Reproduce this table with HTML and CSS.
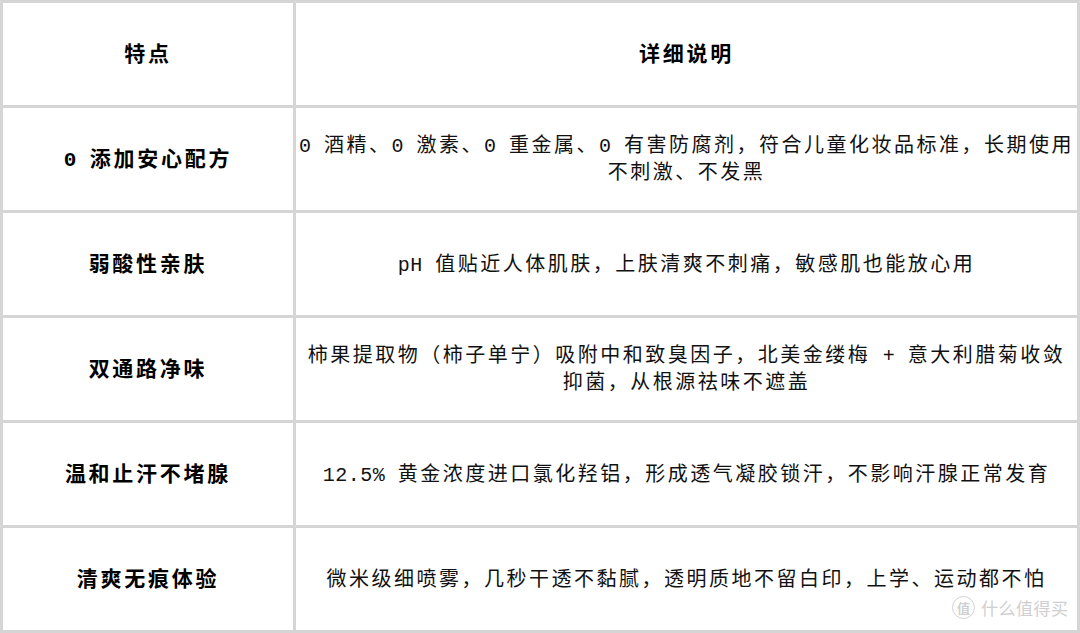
FILE: index.html
```html
<!DOCTYPE html>
<html lang="zh-CN">
<head>
<meta charset="utf-8">
<title>特点</title>
<link rel="stylesheet" href="styles.css">
</head>
<body>
<div class="page">
  <table class="spec">
    <colgroup>
      <col class="col-feature">
      <col class="col-detail">
    </colgroup>
    <thead>
      <tr>
        <th>特点</th>
        <th>详细说明</th>
      </tr>
    </thead>
    <tbody>
      <tr>
        <td class="feature"><span class="en">0 </span>添加安心配方</td>
        <td class="detail"><span class="en">0 </span>酒精、<span class="en">0 </span>激素、<span class="en">0 </span>重金属、<span class="en">0 </span>有害防腐剂，符合儿童化妆品标准，长期使用<br>不刺激、不发黑</td>
      </tr>
      <tr>
        <td class="feature">弱酸性亲肤</td>
        <td class="detail"><span class="en">pH </span>值贴近人体肌肤，上肤清爽不刺痛，敏感肌也能放心用</td>
      </tr>
      <tr>
        <td class="feature">双通路净味</td>
        <td class="detail">柿果提取物（柿子单宁）吸附中和致臭因子，北美金缕梅<span class="en"> + </span>意大利腊菊收敛<br>抑菌，从根源祛味不遮盖</td>
      </tr>
      <tr>
        <td class="feature">温和止汗不堵腺</td>
        <td class="detail"><span class="en">12.5% </span>黄金浓度进口氯化羟铝，形成透气凝胶锁汗，不影响汗腺正常发育</td>
      </tr>
      <tr>
        <td class="feature">清爽无痕体验</td>
        <td class="detail">微米级细喷雾，几秒干透不黏腻，透明质地不留白印，上学、运动都不怕</td>
      </tr>
    </tbody>
  </table>
  <div class="watermark">
    <span class="wm-badge">值</span>
    <span class="wm-text">什么值得买</span>
  </div>
</div>
</body>
</html>
```

FILE: styles.css
```css
html, body {
  margin: 0;
  padding: 0;
  background: #ffffff;
}

.page {
  position: relative;
  width: 1080px;
  height: 633px;
  overflow: hidden;
}

.spec {
  width: 1080px;
  table-layout: fixed;
  border-collapse: separate;
  border-spacing: 3px;
  background: #d5d5d5;
  font-family: "Liberation Mono", "Noto Sans CJK SC", monospace;
  font-size: 20px;
  letter-spacing: 2.5px;
  color: #111111;
}

.col-feature {
  width: 290px;
}

.col-detail {
  width: 781px;
}

.spec th,
.spec td {
  background: #ffffff;
  height: 102px;
  padding: 2px 0 0;
  box-sizing: border-box;
  text-align: center;
  vertical-align: middle;
  white-space: nowrap;
  line-height: 27px;
}

.spec th,
.spec .feature {
  font-size: 21px;
  letter-spacing: 2.75px;
  font-weight: 700;
  color: #000000;
}

.en {
  letter-spacing: 0.5px;
}

.watermark {
  position: absolute;
  left: 952px;
  top: 596px;
  display: flex;
  align-items: center;
  gap: 6px;
  color: #cfcfcf;
  font-family: "Noto Sans CJK SC", sans-serif;
}

.wm-badge {
  width: 21px;
  height: 21px;
  border: 1.5px solid #d2d2d2;
  border-radius: 50%;
  display: flex;
  align-items: center;
  justify-content: center;
  font-size: 13px;
  line-height: 1;
  font-weight: 700;
}

.wm-text {
  font-size: 17px;
  line-height: 20px;
  letter-spacing: 0.5px;
}
```
